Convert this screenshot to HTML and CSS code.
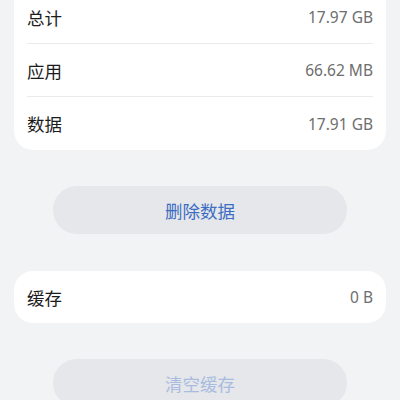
FILE: index.html
```html
<!DOCTYPE html>
<html lang="zh-CN">
<head>
<meta charset="utf-8">
<link rel="stylesheet" href="styles.css">
</head>
<body>
<main class="page">
  <section class="card card-top">
    <div class="row"><span class="label">总计</span><span class="value">17.97 GB</span></div>
    <div class="row"><span class="label">应用</span><span class="value">66.62 MB</span></div>
    <div class="row"><span class="label">数据</span><span class="value">17.91 GB</span></div>
  </section>
  <button class="btn">删除数据</button>
  <section class="card">
    <div class="row single"><span class="label">缓存</span><span class="value">0 B</span></div>
  </section>
  <button class="btn disabled">清空缓存</button>
</main>
</body>
</html>
```
FILE: styles.css
```css
html, body {
  margin: 0;
  padding: 0;
  background: #f1f3f5;
  overflow: hidden;
}
body {
  font-family: "Noto Sans", "Noto Sans CJK SC", sans-serif;
  height: 400px;
}
.page {
  display: flex;
  flex-direction: column;
  padding: 0 14px;
}
.card {
  background: #ffffff;
  border-radius: 19px;
  padding: 0 13px;
}
.card-top {
  margin-top: -9px;
  border-top-left-radius: 0;
  border-top-right-radius: 0;
}
.row {
  display: flex;
  align-items: center;
  justify-content: space-between;
  height: 53px;
  box-sizing: border-box;
  border-bottom: 1px solid #e9eaec;
}
.row:last-child {
  border-bottom: none;
}
.row.single {
  height: 52px;
}
.label {
  font-family: "Noto Sans CJK SC", sans-serif;
  font-size: 17.5px;
  color: #1b1b1b;
}
.value {
  font-size: 15.5px;
  color: #6e6e6e;
}
.btn {
  align-self: center;
  width: 294px;
  height: 48px;
  margin: 36px 0 37px;
  border: none;
  border-radius: 24px;
  background: #e5e7ea;
  font-family: "Noto Sans CJK SC", sans-serif;
  font-size: 17.5px;
  color: #3c6dc2;
  padding: 0;
}
.btn.disabled {
  margin-top: 36px;
  color: #a9bce0;
}
```
